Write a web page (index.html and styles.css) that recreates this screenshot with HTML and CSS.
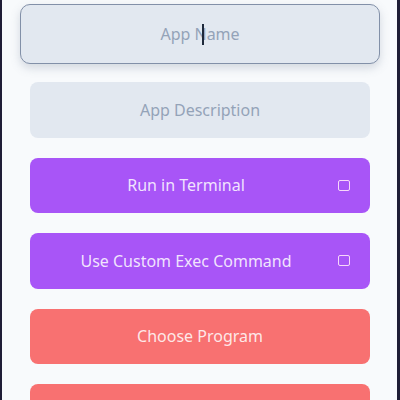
FILE: index.html
```html
<!DOCTYPE html>
<html>

<head>
	<title>New App</title>
	<link rel="stylesheet" href="styles.css">
</head>

<body>
	<div class="form">
		<div class="field-wrap">
			<input class="field main" type="text" placeholder="App Name">
			<span class="caret"></span>
		</div>
		<input class="field" type="text" placeholder="App Description">
		<button class="btn purple"><span class="label">Run in Terminal</span><span class="check"></span></button>
		<button class="btn purple"><span class="label">Use Custom Exec Command</span><span class="check"></span></button>
		<button class="btn red"><span class="label">Choose Program</span></button>
		<button class="btn red"></button>
	</div>
</body>

</html>
```

FILE: styles.css
```css
html {
	background-color: #1f1d36;
}

body {
	margin: 0;
	height: 400px;
	overflow: hidden;
	background-color: #f8fafc;
	border-left: 2px solid #1f1d36;
	border-right: 3px solid #1f1d36;
	font-family: 'Noto Sans', 'Open Sans', sans-serif;
}

.form {
	display: flex;
	flex-direction: column;
	gap: 20px;
	padding: 4px 27px 0 28px;
}

.field-wrap {
	position: relative;
	margin: 0 -10px -2px -10px;
}

.field {
	box-sizing: border-box;
	width: 100%;
	height: 55.5px;
	border: none;
	border-radius: 8px;
	background-color: #e2e8f0;
	font-family: 'Noto Sans', 'Open Sans', sans-serif;
	font-size: 16px;
	text-align: center;
	color: #334155;
	outline: none;
}

.field::placeholder {
	color: #94a3b8;
}

.main {
	height: 60px;
	border: 1.5px solid #8290a8;
	border-radius: 10px;
	box-shadow: 0 4px 10px rgba(100, 116, 139, 0.25);
}

.caret {
	position: absolute;
	left: 182px;
	top: 20px;
	width: 1.5px;
	height: 21px;
	background-color: #1e293b;
}

.btn {
	display: flex;
	align-items: center;
	height: 55.5px;
	padding: 0 20px 0 4px;
	border: none;
	border-radius: 8px;
	font-family: 'Noto Sans', 'Open Sans', sans-serif;
	font-size: 16px;
	color: rgba(255, 255, 255, 0.85);
	cursor: pointer;
}

.label {
	flex: 1;
	text-align: center;
}

.red .label {
	margin-right: -16px;
}

.purple {
	background-color: #a855f7;
}

.red {
	background-color: #f87171;
}

.check {
	box-sizing: border-box;
	width: 12px;
	height: 11px;
	border: 1.5px solid rgba(255, 230, 250, 0.9);
	border-radius: 2px;
}
```
